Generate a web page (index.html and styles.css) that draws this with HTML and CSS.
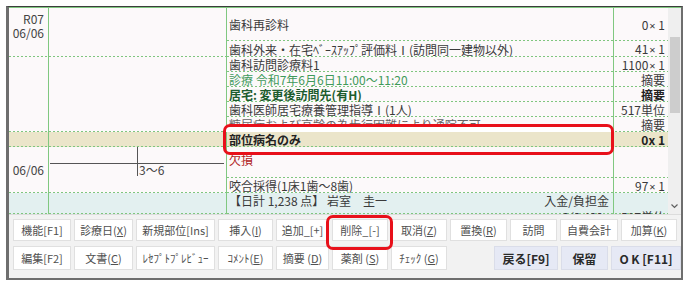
FILE: index.html
```html
<!DOCTYPE html>
<html lang="ja">
<head>
    <meta charset="UTF-8">
    <meta name="viewport" content="width=device-width, initial-scale=1.0">
    <title>診療行為入力</title>
    <link rel="stylesheet" href="styles.css">
</head>
<body>
    <div class="frame">
        <div class="sheet">
            <!-- date / tooth chart columns -->
            <div class="days">
                <div class="day first">
                    <div class="date">R07<br>06/06</div>
                    <div class="chart"></div>
                </div>
                <div class="day empty">
                    <div class="date"></div>
                    <div class="chart"></div>
                </div>
                <div class="day picked">
                    <div class="date"></div>
                    <div class="chart"></div>
                </div>
                <div class="day teeth">
                    <div class="date">06/06</div>
                    <div class="chart">
                        <svg width="177" height="45" viewBox="0 0 177 45">
                            <line x1="1" y1="16.5" x2="175" y2="16.5" stroke="#555" stroke-width="1"/>
                            <line x1="88.5" y1="0" x2="88.5" y2="29" stroke="#555" stroke-width="1"/>
                            <text x="90" y="28" font-size="12" fill="#444">3～6</text>
                        </svg>
                    </div>
                </div>
                <div class="day total">
                    <div class="date"></div>
                    <div class="chart"></div>
                </div>
            </div>

            <!-- procedure lines -->
            <div class="items">
                <div class="item tall">
                    <div class="name">歯科再診料</div>
                    <div class="qty">0<span class="x">×</span> 1</div>
                </div>
                <div class="item h16">
                    <div class="name">歯科外来・在宅ﾍﾞｰｽｱｯﾌﾟ評価料Ⅰ(訪問同一建物以外)</div>
                    <div class="qty">41<span class="x">×</span> 1</div>
                </div>
                <div class="item">
                    <div class="name">歯科訪問診療料1</div>
                    <div class="qty">1100<span class="x">×</span> 1</div>
                </div>
                <div class="item">
                    <div class="name visit">診療 令和7年6月6日11:00～11:20</div>
                    <div class="qty">摘要</div>
                </div>
                <div class="item">
                    <div class="name home">居宅: 変更後訪問先(有H)</div>
                    <div class="qty strong">摘要</div>
                </div>
                <div class="item">
                    <div class="name">歯科医師居宅療養管理指導Ⅰ(1人)</div>
                    <div class="qty">517単位</div>
                </div>
                <div class="item">
                    <div class="name faded">糖尿病および高齢の為歩行困難により通院不可</div>
                    <div class="qty">摘要</div>
                </div>
                <div class="item picked">
                    <div class="name strong">部位病名のみ</div>
                    <div class="qty strong">0x 1</div>
                </div>
                <div class="item missing">
                    <div class="name">欠損</div>
                    <div class="qty"></div>
                </div>
                <div class="item">
                    <div class="name">咬合採得(1床1歯～8歯)</div>
                    <div class="qty">97<span class="x">×</span> 1</div>
                </div>
                <div class="item total">
                    <div class="name">
                        <div class="sum"><span>【日計 1,238 点】 岩室　圭一</span><span>入金/負担金</span></div>
                        <div class="sum"><span></span><span class="paid">0/0 400</span></div>
                    </div>
                    <div class="qty"><br>517単位</div>
                </div>
            </div>

            <div class="scroll">
                <div class="thumb"></div>
                <svg class="arrow" width="7" height="5" viewBox="0 0 7 5">
                    <path d="M0.5 0.5 L3.5 3.5 L6.5 0.5" fill="none" stroke="#606060" stroke-width="1.2"/>
                </svg>
            </div>
        </div>

        <div class="buttons">
            <div class="btn-row">
                <button class="btn">機能[F1]</button>
                <button class="btn">診療日(<u>X</u>)</button>
                <button class="btn">新規部位[Ins]</button>
                <button class="btn">挿入(<u>I</u>)</button>
                <button class="btn">追加_[+]</button>
                <button class="btn">削除_[-]</button>
                <button class="btn">取消(<u>Z</u>)</button>
                <button class="btn">置換(<u>R</u>)</button>
                <button class="btn">訪問</button>
                <button class="btn">自費会計</button>
                <button class="btn">加算(<u>K</u>)</button>
            </div>
            <div class="btn-row second">
                <button class="btn">編集[F2]</button>
                <button class="btn">文書(<u>C</u>)</button>
                <button class="btn">ﾚｾﾌﾟﾄﾌﾟﾚﾋﾞｭｰ</button>
                <button class="btn">ｺﾒﾝﾄ(<u>E</u>)</button>
                <button class="btn">摘要 (<u>D</u>)</button>
                <button class="btn">薬剤 (<u>S</u>)</button>
                <button class="btn">ﾁｪｯｸ (<u>G</u>)</button>
                <div class="spacer"></div>
                <button class="btn main back">戻る[F9]</button>
                <button class="btn main hold">保留</button>
                <button class="btn main ok">O K [F11]</button>
            </div>
        </div>

        <div class="mark mark-row"></div>
        <div class="mark mark-btn"></div>
    </div>
</body>
</html>
```

FILE: styles.css
```css
* {
    box-sizing: border-box;
}
body {
    margin: 0;
    background-color: #ffffff;
    font-family: "Noto Sans CJK JP", "Noto Sans", sans-serif;
    font-size: 12px;
    color: #3a3a3a;
}
.frame {
    position: relative;
    margin: 6px 0 0 6px;
    width: 677px;
    height: 274px;
    border-top: 1px solid #3c3c3c;
    border-left: 3px solid #6e6e6e;
    border-right: 2px solid #6e6e6e;
    border-bottom: 2px solid #6e6e6e;
    background-color: #f2f2f2;
}

/* grid */
.sheet {
    display: flex;
    height: 207px;
    border-top: 1px solid #80c880;
    background-color: #fcf9fa;
    overflow: hidden;
}
.days {
    width: 218px;
    display: flex;
    flex-direction: column;
}
.day, .item {
    display: flex;
    flex-shrink: 0;
    background: repeating-linear-gradient(90deg, #7fc67f 0 2px, transparent 2px 4px) bottom / 100% 1px no-repeat;
}
.day.first { height: 49px; }
.day.empty { height: 75px; }
.day.picked { height: 15px; }
.day.teeth { height: 46px; }
.day.total { flex-grow: 1; }
.date {
    width: 40px;
    border-right: 1px solid #80c880;
    text-align: right;
    padding-right: 4px;
    line-height: 14px;
    color: #444;
}
.day.first .date { padding-top: 4px; }
.day.teeth .date { padding-top: 16px; }
.chart {
    width: 178px;
    border-right: 1px solid #80c880;
}
.chart svg {
    display: block;
    font-family: "Noto Sans CJK JP", sans-serif;
}

.items {
    width: 441px;
    display: flex;
    flex-direction: column;
}
.item {
    height: 15px;
    line-height: 15px;
}
.item.tall {
    height: 33px;
    align-items: center;
}
.item.h16 { height: 16px; }
.item.missing { height: 31px; }
.item.total {
    flex-grow: 1;
    line-height: 16px;
}
.name {
    width: 387px;
    border-right: 1px solid #80c880;
    padding-left: 2px;
    white-space: nowrap;
    overflow: hidden;
    align-self: stretch;
    display: flex;
    flex-direction: column;
    justify-content: center;
}
.item.missing .name {
    justify-content: flex-start;
    padding-top: 5px;
    color: #b01c1c;
}
.qty {
    width: 54px;
    text-align: right;
    padding-right: 3px;
    white-space: nowrap;
    align-self: stretch;
    display: block;
}
.item.tall .qty {
    line-height: 33px;
}
.x {
    font-family: "Noto Sans", sans-serif;
    font-size: 11px;
    margin-left: 1px;
}
.item.total .name {
    justify-content: flex-start;
}
.visit {
    color: #3f9a5a;
}
.home {
    color: #1d5c2e;
    font-weight: bold;
}
.faded {
    color: #666;
}
.strong {
    font-weight: bold;
    color: #222;
}
.picked {
    background-color: #ebe5ca;
}
.total {
    background-color: #e3f0f0;
}
.sum {
    display: flex;
    justify-content: space-between;
    padding-right: 4px;
}
.paid {
    padding-right: 6px;
}

.scroll {
    width: 13px;
    background-color: #efefef;
    display: flex;
    flex-direction: column;
    align-items: center;
    padding-top: 29px;
}
.thumb {
    width: 10px;
    height: 76px;
    background-color: #cdcdcd;
}
.arrow {
    margin-top: auto;
    margin-bottom: 5px;
}

/* buttons */
.buttons {
    height: 64px;
    border-top: 1px solid #dcdcdc;
    padding: 4px 0 0 4px;
    display: flex;
    flex-direction: column;
    gap: 5px;
}
.btn-row {
    display: grid;
    grid-template-columns: 58px 59px 79px 55px 53px 56px 56px 57px 47px 58px 56px;
    gap: 3px;
    height: 22px;
}
.btn-row.second {
    display: flex;
    height: 24px;
}
.btn {
    font-family: "Noto Sans CJK JP", sans-serif;
    font-size: 11px;
    color: #505050;
    background-color: #ffffff;
    border: 1px solid #e0e0e0;
    padding: 0;
    white-space: nowrap;
}
.btn u {
    text-underline-offset: 1px;
}
.second .btn:nth-child(1) { width: 58px; }
.second .btn:nth-child(2) { width: 59px; }
.second .btn:nth-child(3) { width: 79px; }
.second .btn:nth-child(4) { width: 55px; }
.second .btn:nth-child(5) { width: 53px; }
.second .btn:nth-child(6) { width: 56px; }
.second .btn:nth-child(7) { width: 56px; }
.spacer {
    flex-grow: 1;
}
.btn.main {
    background-color: #e6e9f5;
    border-color: #dadde9;
    font-size: 12px;
    font-weight: bold;
    color: #2a2a2a;
}
.btn.back { width: 64px; }
.btn.hold { width: 47px; }
.btn.ok { width: 70px; }

/* red annotation boxes */
.mark {
    position: absolute;
    border: 3px solid #e8101a;
    border-radius: 7px;
}
.mark-row {
    left: 214px;
    top: 117px;
    width: 391px;
    height: 31px;
    background: linear-gradient(#ffffff 0 5px, transparent 5px);
}
.mark-btn {
    left: 317px;
    top: 208px;
    width: 67px;
    height: 35px;
}
```
